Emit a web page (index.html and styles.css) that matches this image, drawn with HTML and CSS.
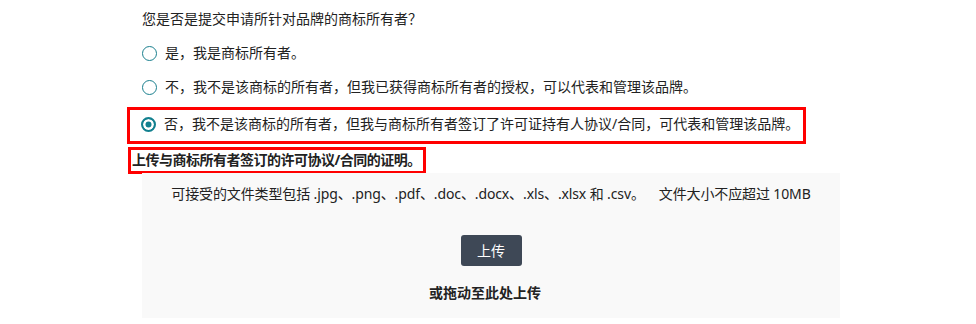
FILE: index.html
```html
<!DOCTYPE html>
<html lang="zh-CN">
<head>
<meta charset="utf-8">
<link rel="stylesheet" href="styles.css">
</head>
<body>
<div class="page">
  <p class="q">您是否是提交申请所针对品牌的商标所有者？</p>
  <label class="opt opt-first"><span class="radio"></span><span>是，我是商标所有者。</span></label>
  <label class="opt"><span class="radio"></span><span>不，我不是该商标的所有者，但我已获得商标所有者的授权，可以代表和管理该品牌。</span></label>
  <div class="hl hl-opt">
    <label class="opt opt-in"><span class="radio checked"></span><span>否，我不是该商标的所有者，但我与商标所有者签订了许可证持有人协议/合同，可代表和管理该品牌。</span></label>
  </div>
  <div class="hl hl-title">上传与商标所有者签订的许可协议/合同的证明。</div>
  <div class="drop">
    <p class="types">可接受的文件类型包括 .jpg、.png、.pdf、.doc、.docx、.xls、.xlsx 和 .csv。<span class="size">文件大小不应超过 10MB</span></p>
    <button class="btn" type="button">上传</button>
    <p class="drag">或拖动至此处上传</p>
  </div>
</div>
</body>
</html>
```

FILE: styles.css
```css
html, body {
  margin: 0;
  padding: 0;
  background: #ffffff;
}
body {
  font-family: "Noto Sans", "Noto Sans CJK SC", sans-serif;
  font-size: 14px;
  color: #222222;
}
.page {
  padding: 9px 0 0 142px;
  width: 698px;
}
.q {
  margin: 0;
  line-height: 20px;
}
.opt {
  display: flex;
  align-items: center;
  gap: 8px;
  height: 20px;
  line-height: 20px;
  margin-top: 14px;
  white-space: nowrap;
}
.opt-in {
  margin-top: 0;
}
.radio {
  box-sizing: border-box;
  width: 15px;
  height: 15px;
  flex: none;
  border-radius: 50%;
  border: 1.5px solid #1a7f8e;
  background: #ffffff;
}
.radio.checked {
  border: 2.5px solid #12808f;
  background: #12808f;
  box-shadow: inset 0 0 0 2.5px #ffffff;
}
.hl {
  box-sizing: border-box;
  border: 3px solid #ff0000;
}
.hl-opt {
  margin: 10px 0 0 -15px;
  width: 679px;
  padding: 4px 0 7px 11px;
}
.hl-title {
  margin: 3px 0 0 -14px;
  width: 298px;
  padding: 0 0 1px 1px;
  line-height: 20px;
  font-weight: 700;
  letter-spacing: -0.5px;
  white-space: nowrap;
}
.drop {
  box-sizing: border-box;
  width: 698px;
  height: 145px;
  margin-top: -1px;
  background: #f9f9f9;
  padding-top: 11px;
  display: flex;
  flex-direction: column;
  align-items: center;
}
.types {
  margin: 0;
  line-height: 20px;
  letter-spacing: -0.12px;
  white-space: nowrap;
}
.size {
  margin-left: 14px;
}
.btn {
  margin-top: 31px;
  width: 61px;
  height: 31px;
  border: 0;
  border-radius: 3px;
  background: #3e4856;
  color: #ffffff;
  font-family: inherit;
  font-size: 14px;
  padding: 0;
  line-height: 31px;
}
.drag {
  margin: 17px 0 0 -12px;
  line-height: 20px;
  font-weight: 700;
}
```
